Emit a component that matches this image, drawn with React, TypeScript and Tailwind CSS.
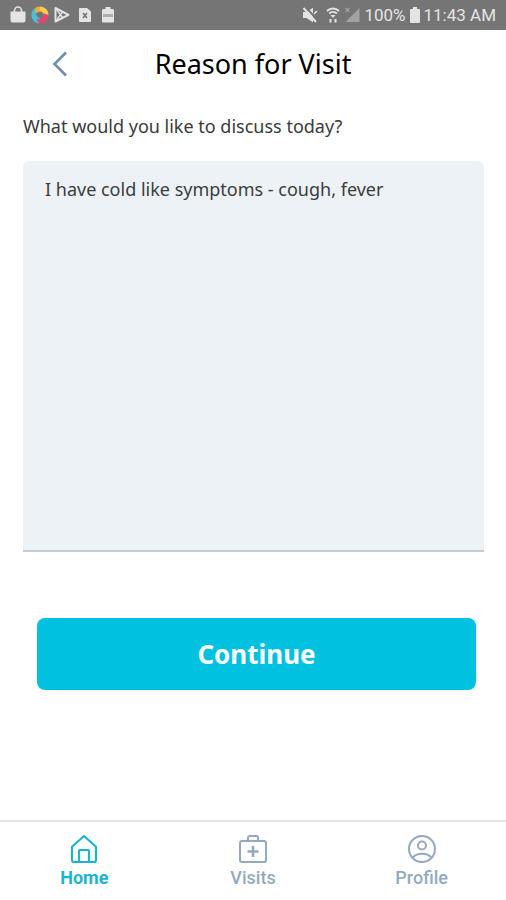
import React, { useState } from 'react';

const TABS = [
  { id: 'home', label: 'Home', Icon: HomeIcon },
  { id: 'visits', label: 'Visits', Icon: VisitsIcon },
  { id: 'profile', label: 'Profile', Icon: ProfileIcon }
];

function HomeIcon() {
  return (
    <svg viewBox="0 0 28 30" className="h-[30px] w-7" fill="none" stroke="currentColor" strokeWidth="2.200" strokeLinejoin="round" aria-hidden="true">
      <path d="M2 12.800 14 2l12 10.800V26a2 2 0 0 1-2 2H4a2 2 0 0 1-2-2z" />
      <path d="M9 28V17a1 1 0 0 1 1-1h8a1 1 0 0 1 1 1v11" />
    </svg>
  );
}

function VisitsIcon() {
  return (
    <svg viewBox="0 0 30 30" className="h-[30px] w-[30px]" fill="none" stroke="currentColor" strokeWidth="2" aria-hidden="true">
      <rect x="2" y="7" width="26" height="21" rx="2" />
      <path d="M10 7V4a2 2 0 0 1 2-2h6a2 2 0 0 1 2 2v3" />
      <path d="M15 12v11M9.500 17.500h11" strokeWidth="2.600" />
    </svg>
  );
}

function ProfileIcon() {
  return (
    <svg viewBox="0 0 30 30" className="h-[30px] w-[30px]" fill="none" stroke="currentColor" strokeWidth="2" aria-hidden="true">
      <circle cx="15" cy="15" r="13" />
      <circle cx="15" cy="11.500" r="4" />
      <path d="M5.500 23.500c2.500-2.600 6-3.800 9.500-3.800s7 1.200 9.500 3.800" />
    </svg>
  );
}

// Notification icons on the left, device state on the right
const StatusBar = () => (
  <div className="flex h-[30px] items-center justify-between bg-[#757575] px-[10px] text-[#e4e4e4]">
    <div className="flex items-center gap-[5px]">
      <svg viewBox="0 0 16 18" className="h-[18px] w-4" aria-hidden="true">
        <path d="M4.500 6V4.500a3.500 3.500 0 0 1 7 0V6" fill="none" stroke="currentColor" strokeWidth="1.600" />
        <path d="M.5 5.500h15V14a2.500 2.500 0 0 1-2.500 2.500H3A2.500 2.500 0 0 1 .5 14z" fill="currentColor" />
      </svg>
      <svg viewBox="0 0 18 18" className="h-[18px] w-[18px]" aria-hidden="true">
        <path d="M12.500 8C11 5 8 5 5 7.500L1 6A8.500 8.500 0 0 1 10 .5c2 2 3.500 4.500 2.500 7.500z" fill="#f5a838" />
        <path d="M1 6c1-2 2-3 4-4-1.500 4-.5 8 4 10.500l-1 5A8.500 8.500 0 0 1 1 6z" fill="#49c0d8" />
        <path d="M10 .5A8.500 8.500 0 0 1 17.500 9L13 10.500C13 6.500 11.500 4.500 8 4z" fill="#f7d04d" />
        <path d="M17.500 9A8.500 8.500 0 0 1 8 17.500L5.500 13c4.500 1 7-1 7.500-5.500z" fill="#e8436c" />
        <circle cx="9" cy="9" r="3" fill="#757575" />
      </svg>
      <svg viewBox="0 0 16 18" className="mr-1 h-[18px] w-4" fill="none" stroke="currentColor" strokeWidth="2" strokeLinejoin="round" aria-hidden="true">
        <path d="M1.500 2v13.500L14.500 8.800z" />
        <path d="m2 2.500 6.500 9M2 15l6.500-9" strokeWidth="1.400" />
      </svg>
      <svg viewBox="0 0 12 16" className="mr-1 h-4 w-3" aria-hidden="true">
        <path d="M1 1h7l4 3.500V14a1 1 0 0 1-1 1H1a1 1 0 0 1-1-1V2a1 1 0 0 1 1-1z" fill="currentColor" />
        <path d="m4 6 4 5M8 6l-4 5" stroke="#757575" strokeWidth="1.600" />
      </svg>
      <svg viewBox="0 0 16 18" className="h-[18px] w-4" aria-hidden="true">
        <path d="M5.500 1h5v2h2A1.500 1.500 0 0 1 14 4.500V15.500a1 1 0 0 1-1 1H3a1 1 0 0 1-1-1V4.500A1.500 1.500 0 0 1 3.500 3h2z" fill="currentColor" />
        <path d="M3 8h10v3H3z" fill="#b0b0b0" />
      </svg>
    </div>
    <div className="flex items-center font-[Roboto,sans-serif] text-[17px] leading-none">
      <svg viewBox="0 0 16 16" className="mr-2 h-4 w-4" aria-hidden="true">
        <path d="M1 5h3.500L11 .800v14.400L4.500 11H1z" fill="currentColor" />
        <path d="m3.500 0 12 13" stroke="#757575" strokeWidth="2" />
        <path d="m1.500 1 12.500 14" stroke="currentColor" strokeWidth="2" />
        <path d="m12 7 3-3" stroke="currentColor" strokeWidth="1.600" />
      </svg>
      <svg viewBox="0 0 14 16" className="mr-1 h-4 w-[14px]" fill="none" stroke="currentColor" strokeWidth="2" aria-hidden="true">
        <path d="M1 4C4.500.800 9.500.800 13 4M3.200 6.500c2.200-2 5.400-2 7.600 0" />
        <path d="M4.500 8h5L7 11z" fill="currentColor" stroke="none" />
        <path d="M4.500 12v3.500M9.500 12v3.500" />
      </svg>
      <svg viewBox="0 0 16 16" className="mr-1 h-4 w-4" aria-hidden="true">
        <path d="M15.500 1v14H1.500z" fill="#a2a2a2" />
        <path d="m1.500 1 4 4M5.500 1l-4 4" stroke="#a2a2a2" strokeWidth="1.400" />
      </svg>
      <span>100%</span>
      <svg viewBox="0 0 10 16" className="mx-1 h-4 w-[10px]" fill="currentColor" aria-hidden="true">
        <path d="M3 0h4v2h2a1 1 0 0 1 1 1v12a1 1 0 0 1-1 1H1a1 1 0 0 1-1-1V3a1 1 0 0 1 1-1h2z" />
      </svg>
      <span>11:43 AM</span>
    </div>
  </div>
);

const App = () => {
  const [reason, setReason] = useState('I have cold like symptoms - cough, fever');
  const [activeTab, setActiveTab] = useState('home');

  return (
    <div className="flex min-h-screen flex-col bg-white font-['Noto_Sans',sans-serif] text-[#18191b]">
      <StatusBar />

      {/* Header */}
      <header className="grid h-[68px] grid-cols-[48px_1fr_48px] items-center px-9">
        <button type="button" aria-label="Back" className="flex h-12 w-12 items-center justify-center text-[#6f8fae]">
          <svg viewBox="0 0 16 26" className="h-[26px] w-4" fill="none" stroke="currentColor" strokeWidth="2.600" aria-hidden="true">
            <path d="M14 1.500 2.500 13 14 24.500" />
          </svg>
        </button>
        <h1 className="text-center text-[27px] leading-9 text-black">Reason for Visit</h1>
      </header>

      <main className="flex flex-1 flex-col pr-[22px] pl-[23px]">
        <label htmlFor="reason" className="mt-4 mb-[23px] text-lg leading-6 text-[#3a3a3a]">
          What would you like to discuss today?
        </label>
        <textarea
          id="reason"
          value={reason}
          onChange={(e) => setReason(e.target.value)}
          className="min-h-60 w-full flex-1 resize-none rounded-t-md border-b-2 border-[#c3ccd1] bg-[#edf2f6] px-[22px] py-4 text-lg leading-6 text-[#3a3d40] outline-none"
        />
        <div className="pt-[66px] pr-2 pb-[130px] pl-[14px]">
          <button type="button" className="h-[72px] w-full rounded-lg bg-[#00c1df] text-[26px] font-bold text-white">
            Continue
          </button>
        </div>
      </main>

      {/* Bottom tabs */}
      <nav className="grid h-20 grid-cols-3 border-t-2 border-[#e1e7ed] font-[Roboto,sans-serif]">
        {TABS.map(({ id, label, Icon }) => (
          <button
            key={id}
            type="button"
            onClick={() => setActiveTab(id)}
            className={`flex flex-col items-center gap-1 pt-3 text-lg leading-5 ${
              activeTab === id ? 'font-bold text-[#1bb5d2]' : 'font-medium text-[#93a9be]'
            }`}
          >
            <Icon />
            {label}
          </button>
        ))}
      </nav>
    </div>
  );
};

export default App;
